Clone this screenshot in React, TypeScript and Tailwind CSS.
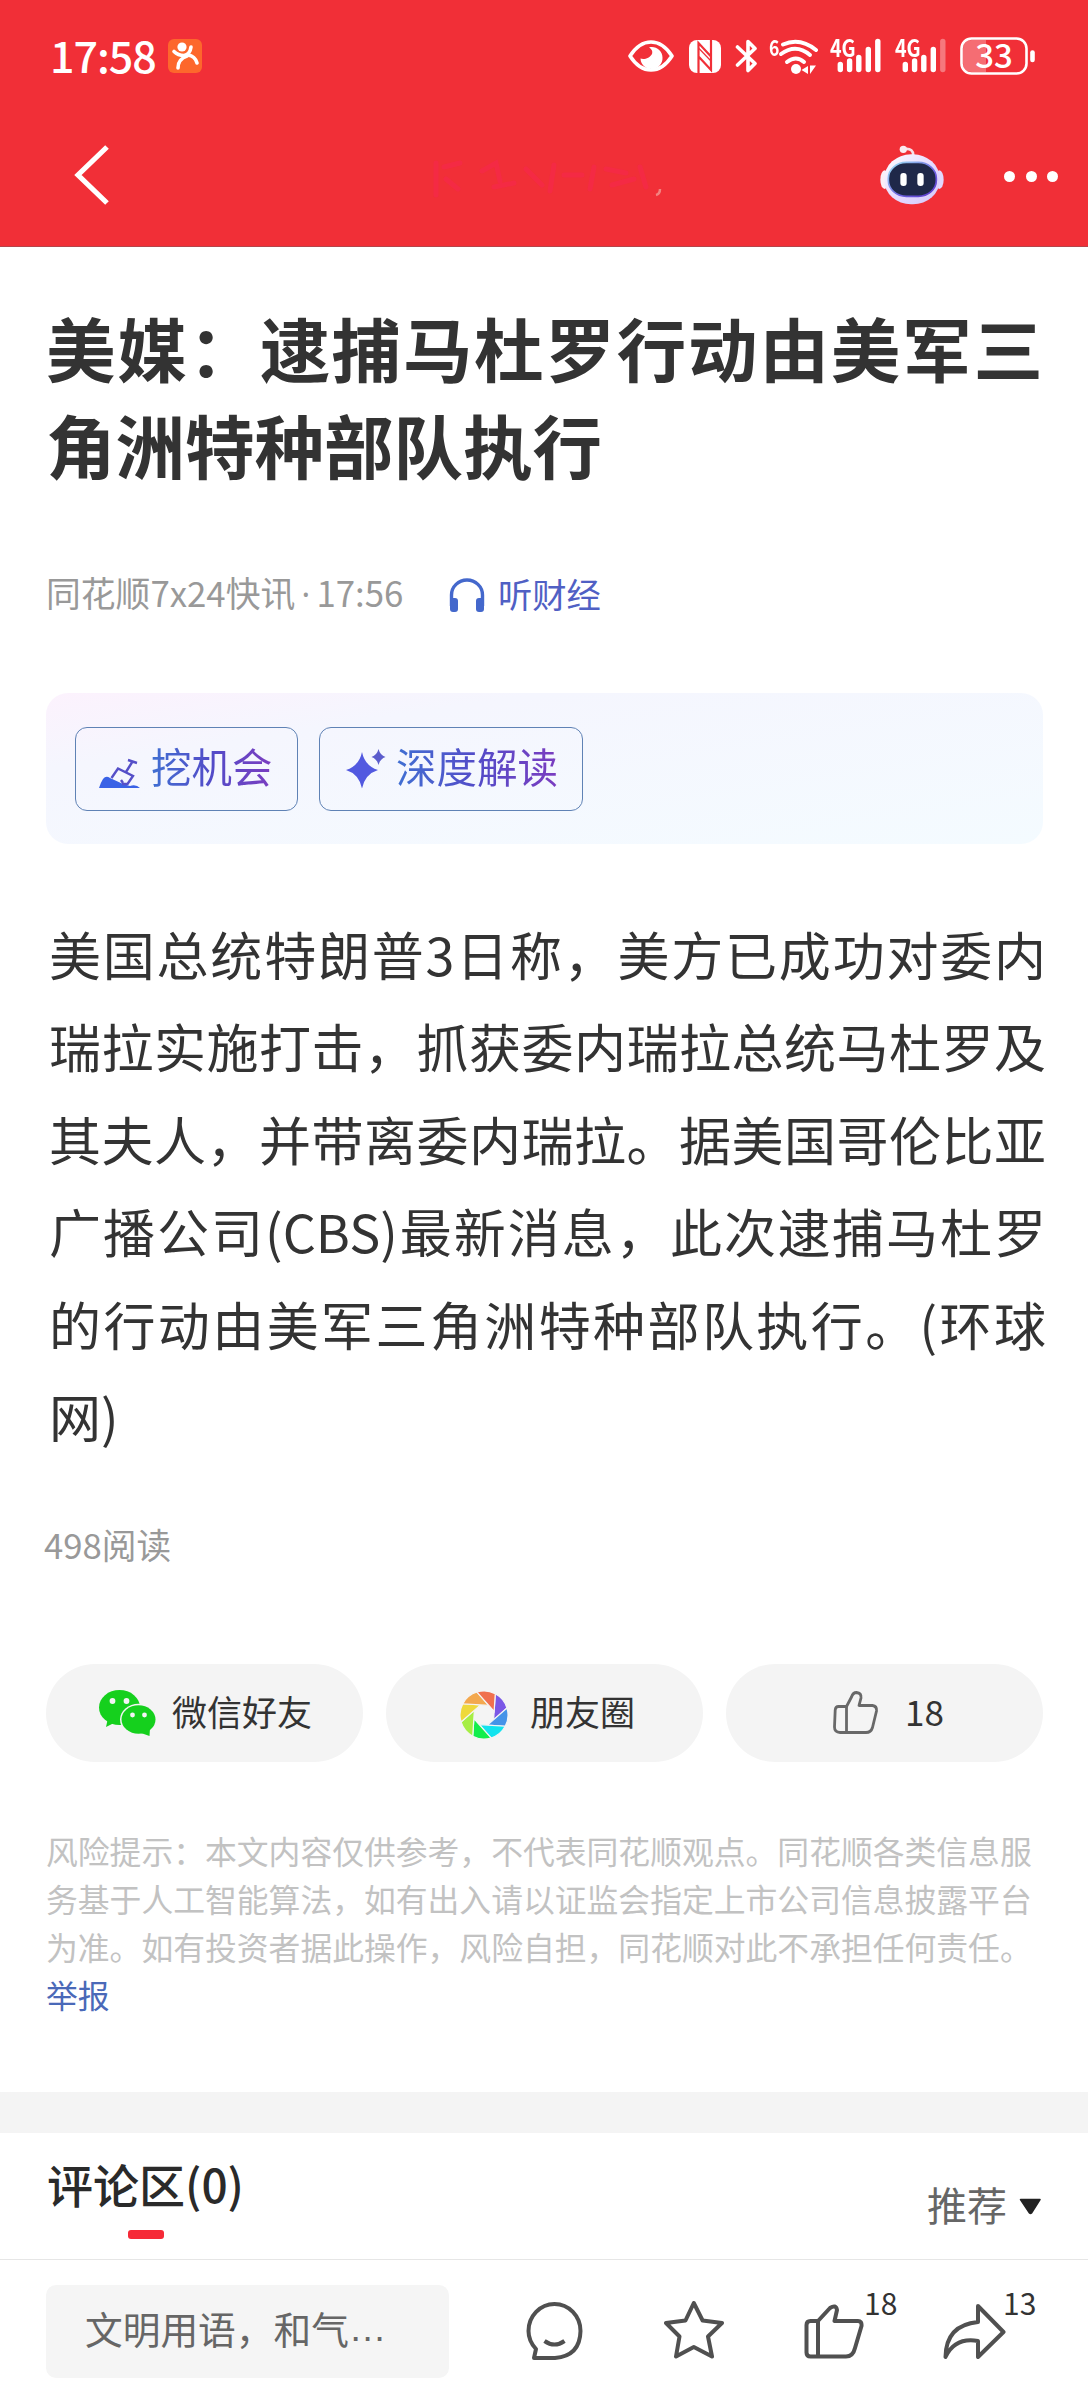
import React from 'react';

const BLADE_COLORS = ['#7a57e6', '#4593e8', '#12e3ee', '#12ee4c', '#a6ee45', '#eed93c', '#f3a84e', '#f0704e'];

// Each blade is a triangle: two points on the outer ring and one on the inner octagon
const blades = BLADE_COLORS.map((color, i) => {
  const point = (deg: number, r: number) => {
    const rad = (deg * Math.PI) / 180;
    return `${(24 + r * Math.cos(rad)).toFixed(2)} ${(24 + r * Math.sin(rad)).toFixed(2)}`;
  };
  const start = -62 + i * 45;
  return {
    color,
    d: `M${point(start, 24)}A24 24 0 0 1 ${point(start + 45, 24)}L${point(start + 88, 10.7)}Z`,
  };
});

const PARAGRAPH =
  '美国总统特朗普3日称，美方已成功对委内瑞拉实施打击，抓获委内瑞拉总统马杜罗及其夫人，并带离委内瑞拉。据美国哥伦比亚广播公司(CBS)最新消息，此次逮捕马杜罗的行动由美军三角洲特种部队执行。(环球网)';

const SignalIcon: React.FC<{ weak?: boolean }> = ({ weak }) => (
  <div className="relative h-[36px] w-[52px]">
    <span className="absolute left-0 top-[-3px] origin-left scale-x-[0.82] text-[24px] font-bold leading-[24px]">4G</span>
    <svg width="52" height="36" viewBox="0 0 52 36">
      <g stroke="#fff" strokeWidth="5.400" strokeLinecap="round">
        <path d="M10.300 26.500V31.500M19.600 23V31.500M28.800 19.500V31.500M38.300 11.500V31.500" />
        <path d="M47.800 3.500V31.500" opacity={weak ? 0.35 : 1} />
      </g>
    </svg>
  </div>
);

const StatusBar = () => (
  <div className="flex h-[112px] items-center pl-[50px] pr-[52px] text-white">
    <span className="mt-[-4px] w-[110px] text-[43px] font-medium leading-none tracking-[-1px]">17:58</span>
    <svg className="ml-2" width="34" height="34" viewBox="0 0 34 34">
      <rect width="34" height="34" rx="6" fill="#fd672c" />
      <circle cx="14" cy="8" r="4.600" fill="#fff" />
      <g fill="none" stroke="#fff" strokeWidth="3.600" strokeLinecap="round">
        <path d="M6 12.500Q10 16.500 16 16.500Q22 15.500 23 8" />
        <path d="M20 16Q27 17 29 24" />
        <path d="M19 17Q10 20 10 29" />
      </g>
    </svg>

    <div className="ml-auto flex items-center">
      {/* Eye comfort */}
      <svg width="46" height="32" viewBox="0 0 46 32">
        <path d="M2 16Q11 2 23 2T44 16Q35 30 23 30T2 16Z" fill="none" stroke="#fff" strokeWidth="3.600" strokeLinejoin="round" />
        <path d="M21 7.500C27 5.500 34.500 10 34.500 17.500A11 11 0 0 1 12.500 18.500C16 20 22 18 24 14C25 11 23.500 9 21 7.500Z" fill="#fff" />
      </svg>
      {/* NFC */}
      <svg className="ml-[15px]" width="32" height="33" viewBox="0 0 32 33">
        <rect width="32" height="33" rx="8" fill="#fff" />
        <path d="M9.500 33V3L21.500 16M22 0V30L10 17" fill="none" stroke="#f12f37" strokeWidth="2.200" />
        <path d="M10 8.500L21.500 20.500" stroke="#f12f37" strokeWidth="1.200" />
      </svg>
      {/* Bluetooth */}
      <svg className="ml-[14px]" width="23" height="36" viewBox="0 0 23 36">
        <path d="M2.500 9L20 25.500L13 32.500V3.500L20 10.500L2.500 27" fill="none" stroke="#fff" strokeWidth="3.600" strokeLinecap="round" strokeLinejoin="round" />
      </svg>
      {/* Wifi */}
      <div className="relative ml-[11px] h-[37px] w-[50px]">
        <span className="absolute left-0 top-[-4px] origin-left scale-x-[0.8] text-[22px] font-bold leading-[24px]">6</span>
        <svg width="50" height="37" viewBox="0 0 50 37">
          <g fill="none" stroke="#fff" strokeWidth="4" strokeLinecap="round">
            <path d="M14 6.500Q31 -1 47 12" />
            <path d="M12 16Q27 5 41 17" />
            <path d="M18 24Q27 17 35 24" />
          </g>
          <circle cx="27" cy="31" r="5" fill="#fff" />
          <path d="M39 28V36L32.500 32ZM41 27.500H47L41 36Z" fill="#fff" />
        </svg>
      </div>
      <div className="ml-[11px] flex gap-[13px]">
        <SignalIcon />
        <SignalIcon weak />
      </div>
      {/* Battery */}
      <div className="relative ml-[13px] h-[38px] w-[76px]">
        <svg width="76" height="38" viewBox="0 0 76 38">
          <path d="M26 3H12Q3 3 3 12V26Q3 35 12 35H26Z" fill="#fff" opacity="0.3" />
          <rect x="1.500" y="1.500" width="65" height="35" rx="10" fill="none" stroke="#fff" strokeWidth="2.600" />
          <path d="M72.500 15.500V23" stroke="#fff" strokeWidth="4.600" strokeLinecap="round" />
        </svg>
        <span className="absolute left-0 top-[-2px] w-[68px] text-center text-[33px] font-medium leading-[38px]">33</span>
      </div>
    </div>
  </div>
);

const NavBar = () => (
  <div className="flex h-[126px] items-center pl-[74px] pr-[30px]">
    <svg width="36" height="62" viewBox="0 0 36 62">
      <path d="M33 3L4 31L33 59" fill="none" stroke="#fff" strokeWidth="5.200" />
    </svg>
    {/* Faded marks in the middle of the bar */}
    <svg className="ml-[320px] mt-[6px]" width="234" height="46" viewBox="0 0 234 46">
      <g fill="none" stroke="#fb2458" strokeWidth="5" opacity="0.4" strokeLinecap="round">
        <path d="M6 8V40M14 12L30 8M16 24L28 34M52 16L66 8L70 26M64 32L84 28M96 14L112 30M124 10L120 36M134 20H152M164 12L160 34M176 14L196 18M182 30L204 24M210 12L216 32" />
      </g>
      <path d="M226 40Q230 39 230 34" stroke="#f3a7a0" strokeWidth="2.500" fill="none" opacity="0.7" />
    </svg>
    {/* Assistant robot */}
    <svg className="ml-auto" width="64" height="60" viewBox="0 0 192 180">
      <defs>
        <linearGradient id="head" x1="0" y1="0" x2="1" y2="1">
          <stop offset="0" stopColor="#fff" />
          <stop offset="0.5" stopColor="#e6dbff" />
          <stop offset="1" stopColor="#d3c8fa" />
        </linearGradient>
        <linearGradient id="visor" x1="0" y1="0" x2="1" y2="1">
          <stop offset="0" stopColor="#9ee6f5" />
          <stop offset="0.6" stopColor="#6d62e0" />
          <stop offset="1" stopColor="#5a35c8" />
        </linearGradient>
      </defs>
      <path d="M76 12Q100 10 100 32" fill="none" stroke="#f7dfe8" strokeWidth="8" />
      <circle cx="70" cy="13" r="11" fill="#fbeaf0" />
      <ellipse cx="14" cy="104" rx="13" ry="28" fill="#fbeef6" />
      <ellipse cx="178" cy="104" rx="13" ry="28" fill="#e2d8fc" />
      <rect x="13" y="28" width="166" height="150" rx="80" ry="72" fill="url(#head)" />
      <rect x="25" y="52" width="144" height="102" rx="54" ry="48" fill="#1f2849" stroke="url(#visor)" strokeWidth="5" />
      <rect x="61" y="84" width="19" height="39" rx="9" fill="#fff" />
      <rect x="112" y="84" width="19" height="39" rx="9" fill="#fff" />
    </svg>
    <div className="ml-[60px] mt-[3px] flex gap-[10.500px]">
      <i className="size-[11px] rounded-full bg-white" />
      <i className="size-[11px] rounded-full bg-white" />
      <i className="size-[11px] rounded-full bg-white" />
    </div>
  </div>
);

const GradientText: React.FC<{ children: React.ReactNode }> = ({ children }) => (
  <span className="mt-[-6px] bg-linear-to-r from-[#3f6fd2] via-[#524bc8] to-[#7a3cc0] bg-clip-text text-[40.500px] leading-[56px] text-transparent">
    {children}
  </span>
);

const AiPanel = () => (
  <div className="mt-[76px] flex h-[151px] items-center gap-[21px] rounded-[22px] bg-linear-to-br from-[#fcf2fd] via-[#f5f6fe] via-25% to-[#f4fbff] pl-[29px]">
    <button className="flex h-[84px] w-[223px] items-center rounded-[12px] border border-[#5f82b5] pl-[23px]">
      <svg className="mr-[10px] mt-[9px]" width="42" height="30" viewBox="0 0 42 30">
        <path d="M0 30Q2 24 4 21Q7 17 11 20L24 26L31 28Q37 26 41 30Z" fill="#3a62e6" />
        <g fill="none" stroke="#554fc8" strokeWidth="2.400">
          <path d="M12.500 20L19 10.500L34 18L28.500 26L23 26M29 2L38 5M33.500 3.500L27 14" />
          <path d="M22 22L24 25" />
        </g>
      </svg>
      <GradientText>挖机会</GradientText>
    </button>
    <button className="flex h-[84px] w-[264px] items-center rounded-[12px] border border-[#5f82b5] pl-[26px]">
      <svg className="mr-[10px]" width="40" height="40" viewBox="0 0 40 40">
        <path d="M16 3Q19 17 32 21Q19 25 16 39.500Q13 25 0 21Q13 17 16 3Z" fill="#5259e0" />
        <path d="M32.500 0Q34 6 39.500 8Q34 10 32.500 16Q31 10 25.500 8Q31 6 32.500 0Z" fill="#5b5ccc" />
      </svg>
      <GradientText>深度解读</GradientText>
    </button>
  </div>
);

const ShareButtons = () => (
  <div className="mt-[95px] flex gap-[23px] text-[35px] leading-[50px] text-[#333]">
    <button className="flex h-[98px] w-[317px] shrink-0 items-center rounded-full bg-[#f4f4f4] pl-[53px]">
      <svg className="mr-[16px]" width="57" height="46" viewBox="0 0 57 46">
        <g fill="#15d01d">
          <ellipse cx="20.500" cy="17.500" rx="20.500" ry="17.500" />
          <path d="M9 28L7 37L17 32Z" />
        </g>
        <ellipse cx="39.500" cy="29.500" rx="18.500" ry="15.700" fill="#f4f4f4" />
        <ellipse cx="39.500" cy="29.500" rx="17" ry="14.300" fill="#15d01d" />
        <path d="M51 38L50.500 46L42 43Z" fill="#15d01d" />
        <g fill="#f4f4f4">
          <circle cx="13.500" cy="11" r="2.900" />
          <circle cx="27.500" cy="11" r="2.900" />
          <circle cx="33.500" cy="25" r="2.400" />
          <circle cx="45.500" cy="25" r="2.400" />
        </g>
      </svg>
      <span className="mt-[-4px]">微信好友</span>
    </button>
    <button className="flex h-[98px] w-[317px] shrink-0 items-center rounded-full bg-[#f4f4f4] pl-[74px]">
      <svg className="mr-[22px] mt-[3px]" width="48" height="48" viewBox="0 0 48 48">
        {blades.map((blade) => (
          <path key={blade.color} d={blade.d} fill={blade.color} stroke="#f4f4f4" strokeWidth="1.200" />
        ))}
      </svg>
      <span className="mt-[-4px]">朋友圈</span>
    </button>
    <button className="flex h-[98px] w-[317px] shrink-0 items-center rounded-full bg-[#f4f4f4] pl-[107px]">
      <svg className="mr-[26px]" width="46" height="44" viewBox="0 0 46 44">
        <g fill="none" stroke="#686868" strokeWidth="2.800" strokeLinejoin="round">
          <path d="M13.500 15.500L18.500 6Q20 1.500 23.500 1.500Q28.500 2 28 7L26 14.500H39.500Q44 15 43.500 20L39.500 36.500Q38 41.500 33 41.500H7Q1.500 41.500 1.500 36L2.200 19Q2.500 15.500 5.500 15.500Z" />
          <path d="M13.500 15.500V41" />
        </g>
      </svg>
      <span className="mt-[-4px]">18</span>
    </button>
  </div>
);

const CommentHeader = () => (
  <div className="flex h-[127px] justify-between border-b-[1.500px] border-[#e6e6e6] px-[46px]">
    <div className="flex flex-col items-start pl-px pt-[18px]">
      <span className="text-[46px] font-medium leading-[64px] text-[#2a2a2a]">评论区(0)</span>
      <i className="ml-[81px] mt-[15px] h-[9px] w-[36px] rounded-[3px] bg-[#f62a37]" />
    </div>
    <div className="flex items-center pt-[16px] text-[40px] leading-[56px] text-[#666]">
      推荐
      <svg className="ml-[12px] mt-[5px]" width="23" height="17" viewBox="0 0 23 17">
        <path d="M1.500 1.500H21L12.500 15Q11.500 16 10.500 15Z" fill="#222" stroke="#222" strokeWidth="1.500" strokeLinejoin="round" />
      </svg>
    </div>
  </div>
);

const BottomBar = () => (
  <div className="flex h-[141px] items-start pl-[46px] pt-[25px]">
    <div className="flex h-[93px] w-[403px] items-center rounded-[10px] bg-[#f5f5f5] pb-[6px] pl-[39px] text-[37.700px] leading-[52px] text-[#666]">
      文明用语，和气<span className="font-['Liberation_Sans',sans-serif]">…</span>
    </div>
    <div className="flex items-start pt-[16px] text-[#505050]">
      <svg className="ml-[77px]" width="58" height="60" viewBox="0 0 58 60" fill="none" stroke="currentColor" strokeWidth="4" strokeLinejoin="round">
        <path d="M29 57H8L10 48Q2.500 40 2.500 30A26 27 0 0 1 54.500 30Q54 55 29 57Z" />
        <path d="M18.500 40Q28.500 47 38.500 40" />
      </svg>
      <svg className="ml-[80px]" width="60" height="58" viewBox="0 0 60 58" fill="none" stroke="currentColor" strokeWidth="4" strokeLinejoin="round">
        <path d="M29.800 2L38.600 19.500L58 22L44 35.500L48 55.500L29.800 46L12 55.500L15.500 35.500L2 22L21.500 19.500Z" />
      </svg>
      <svg className="ml-[80px] mt-[3px]" width="60" height="55" viewBox="0 0 60 55" fill="none" stroke="currentColor" strokeWidth="4" strokeLinejoin="round">
        <path d="M14 17L26 4Q32 0 33 6L30.500 17H54Q58 17 57.500 22L51 44Q49 52.500 42 52.500H6.500Q2.500 52.500 2.500 48.500V21Q2.500 17 6.500 17ZM14 17V52.500" />
      </svg>
      <span className="mt-[-17px] w-[32px] text-[30px] leading-[36px] text-[#333]">18</span>
      <svg className="ml-[47px] mt-[2px]" width="63" height="56" viewBox="0 0 63 56" fill="none" stroke="currentColor" strokeWidth="4" strokeLinejoin="round">
        <path d="M35 3L60.500 29L35 54V38Q12 34 2.500 54Q3 22 35 19Z" />
      </svg>
      <span className="ml-[-3px] mt-[-17px] text-[30px] leading-[36px] text-[#333]">13</span>
    </div>
  </div>
);

export default function App() {
  return (
    <div className="h-[2400px] w-[1088px] overflow-hidden bg-white font-['Noto_Sans_CJK_SC',sans-serif]">
      <header className="h-[247px] border-b border-[#b5444a] bg-[#f12f37]">
        <StatusBar />
        <NavBar />
      </header>

      <main className="pl-[46px] pr-[45px]">
        <h1 className="mt-[51px] text-justify text-[69.500px] font-bold leading-[97px] text-[#333]">
          美媒：逮捕马杜罗行动由美军三角洲特种部队执行
        </h1>

        <div className="mt-[77px] flex h-[48px] items-center text-[34.800px] leading-[48px] text-[#999]">
          <span className="w-[403px] whitespace-nowrap">
            同花顺7x24快讯<span className="mx-[6px] font-['Open_Sans',sans-serif]">·</span>17:56
          </span>
          <svg className="mr-[13px] mt-[3px]" width="36" height="34" viewBox="0 0 36 34">
            <path d="M2.500 28V17A15.500 15 0 0 1 33.500 17V28" fill="none" stroke="#4468cc" strokeWidth="3.400" />
            <rect x="1" y="20" width="8" height="14" rx="3" fill="#4468cc" />
            <rect x="27" y="20" width="8" height="14" rx="3" fill="#4468cc" />
          </svg>
          <span className="text-[34.300px] text-[#5060c4]">听财经</span>
        </div>

        <AiPanel />

        <p className="ml-[3px] mr-[-3px] mt-[64px] text-justify text-[52px] leading-[92.400px] text-[#333]">{PARAGRAPH}</p>

        <div className="ml-[-2px] mt-[58px] h-[49px] text-[34.700px] leading-[48px] text-[#999]">498阅读</div>

        <ShareButtons />

        <p className="mr-[3px] mt-[65px] text-[31.800px] leading-[47.800px] text-[#c2c2c2]">
          风险提示：本文内容仅供参考，不代表同花顺观点。同花顺各类信息服务基于人工智能算法，如有出入请以证监会指定上市公司信息披露平台为准。如有投资者据此操作，风险自担，同花顺对此不承担任何责任。
          <a className="block text-[#4a69b8]">举报</a>
        </p>
      </main>

      <div className="mt-[73px] h-[41px] bg-[#f4f4f4]" />
      <CommentHeader />
      <BottomBar />
    </div>
  );
}
